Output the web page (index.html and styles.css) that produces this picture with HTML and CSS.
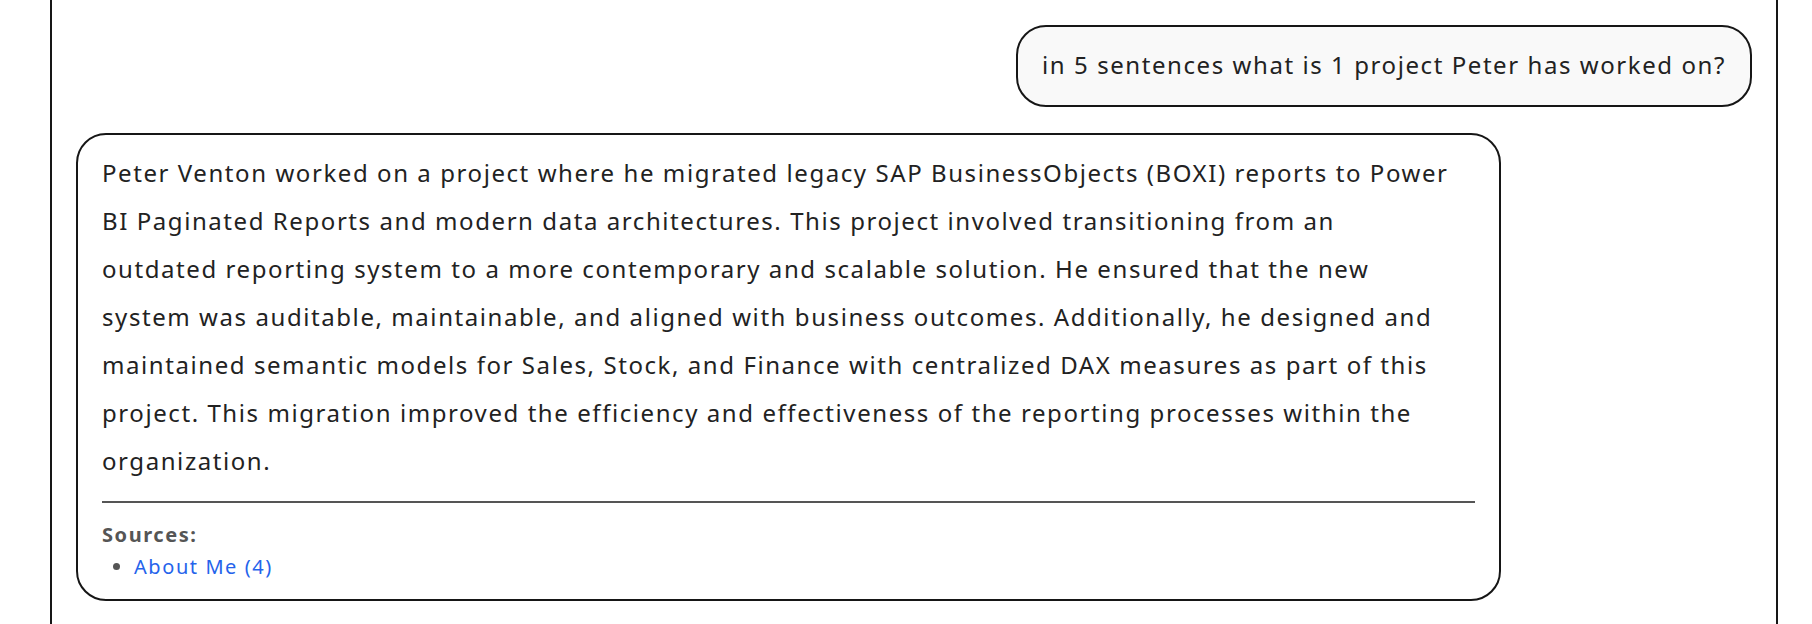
FILE: index.html
```html
<!DOCTYPE html>
<html lang="en">
<head>
<meta charset="utf-8">
<title>Chat</title>
<link rel="stylesheet" href="styles.css">
</head>
<body>
<main class="chat">
  <div class="msg msg-user">
    <div class="bubble bubble-user">in 5 sentences what is 1 project Peter has worked on?</div>
  </div>
  <div class="msg msg-bot">
    <div class="bubble bubble-bot">
      <p class="answer">Peter Venton worked on a project where he migrated legacy SAP BusinessObjects (BOXI) reports to Power BI Paginated Reports and modern data architectures. This project involved transitioning from an outdated reporting system to a more contemporary and scalable solution. He ensured that the new system was auditable, maintainable, and aligned with business outcomes. Additionally, he designed and maintained semantic models for Sales, Stock, and Finance with centralized DAX measures as part of this project. This migration improved the efficiency and effectiveness of the reporting processes within the organization.</p>
      <hr class="divider">
      <div class="sources">
        <div class="sources-title">Sources:</div>
        <ul class="sources-list">
          <li><a href="#" class="source-link">About Me (4)</a></li>
        </ul>
      </div>
    </div>
  </div>
</main>
</body>
</html>
```
FILE: styles.css
```css
* {
  box-sizing: border-box;
}

html, body {
  margin: 0;
  padding: 0;
  background: #ffffff;
}

body {
  padding-left: 50px;
  font-family: "Noto Sans", "Open Sans", "Liberation Sans", sans-serif;
  letter-spacing: 0.0983em;
  color: #222222;
}

.chat {
  width: 1728px;
  min-height: 100vh;
  border-left: 2px solid #161616;
  border-right: 2px solid #161616;
  padding: 25px 24px 24px;
  display: flex;
  flex-direction: column;
  gap: 26px;
}

.msg {
  display: flex;
}

.msg-user {
  justify-content: flex-end;
}

.msg-bot {
  justify-content: flex-start;
}

.bubble {
  border: 2px solid #161616;
  border-radius: 30px;
  font-size: 24px;
}

.bubble-user {
  background: #f9f9f9;
  padding: 15px 24px 17px;
  line-height: 46px;
}

.bubble-bot {
  width: 85%;
  background: #ffffff;
  padding: 14px 24px 16px;
}

.answer {
  margin: 0;
  max-width: 1350px;
  line-height: 48px;
}

.divider {
  margin: 16px 0;
  border: 0;
  height: 2px;
  background: #555555;
}

.sources {
  font-size: 20px;
  line-height: 32px;
}

.sources-title {
  font-weight: 700;
  color: #555555;
}

.sources-list {
  margin: 0;
  padding-left: 32px;
  color: #555555;
}

.source-link {
  color: #2563eb;
  text-decoration: none;
}
```
